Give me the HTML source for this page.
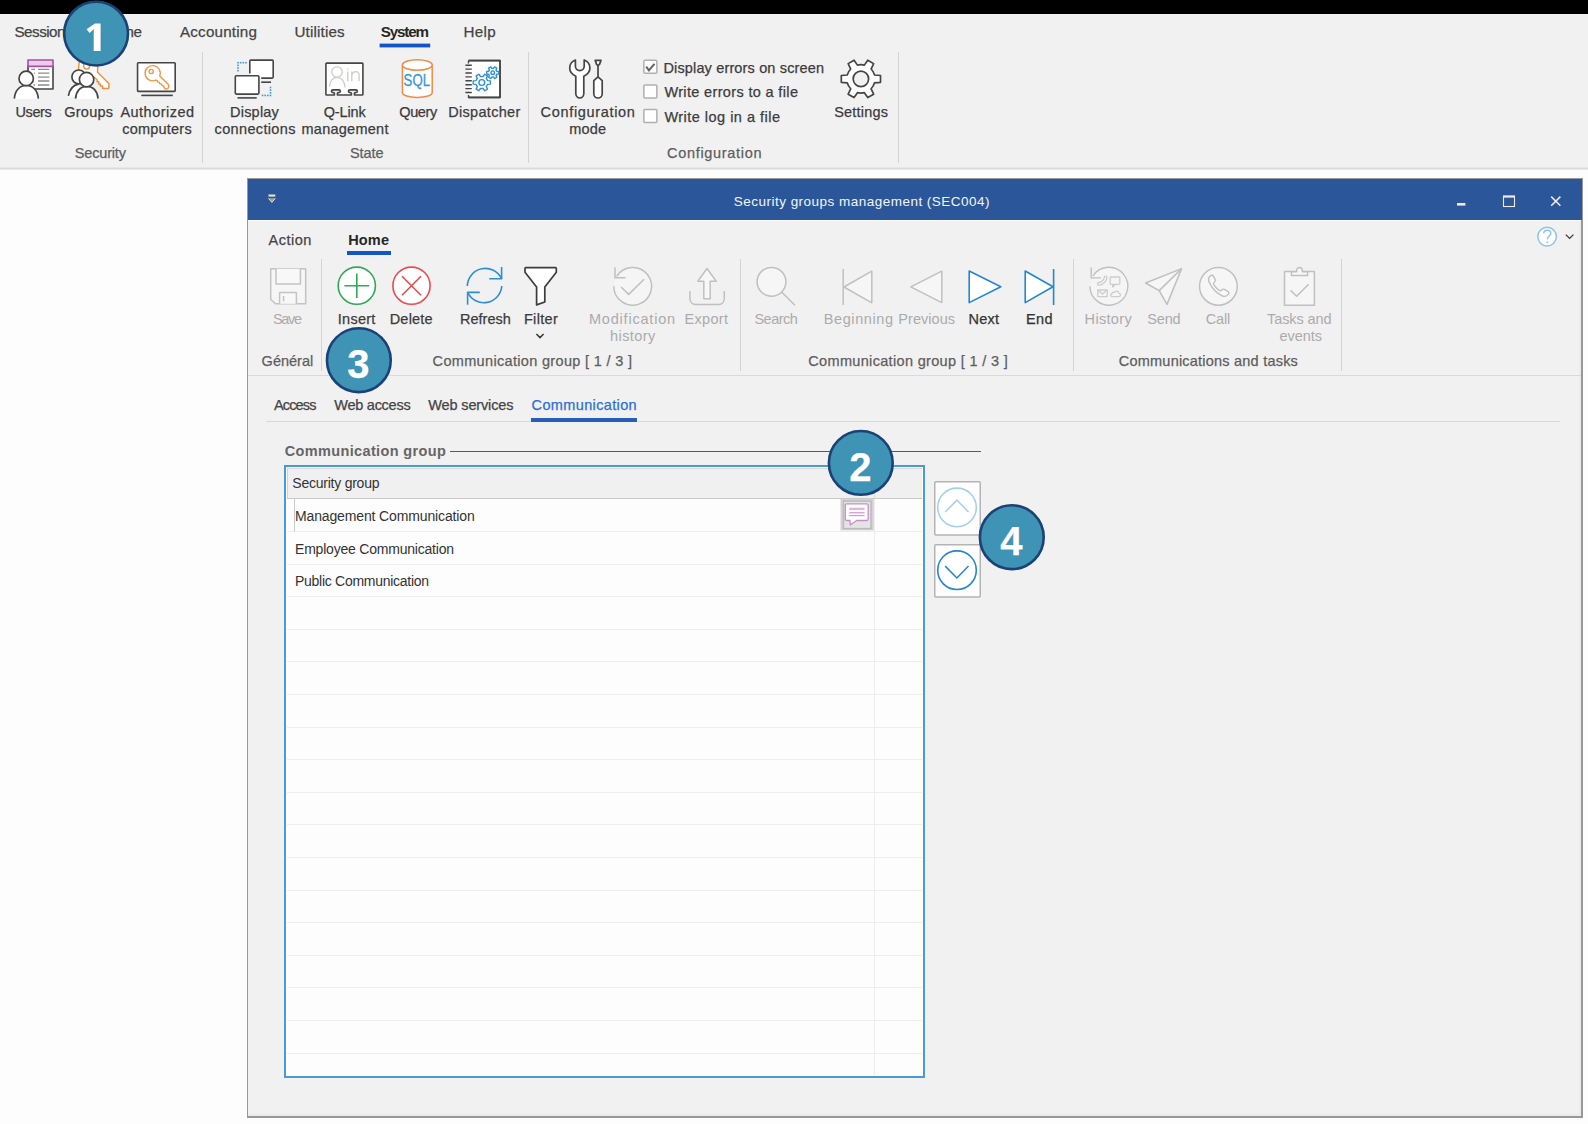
<!DOCTYPE html>
<html>
<head>
<meta charset="utf-8">
<title>Security groups management</title>
<style>
html,body{margin:0;padding:0;}
body{width:1588px;height:1124px;position:relative;overflow:hidden;background:#fdfdfd;font-family:"Liberation Sans",sans-serif;}
.a{position:absolute;}
.t{-webkit-text-stroke:0.25px currentColor;position:absolute;white-space:nowrap;line-height:20px;height:20px;font-family:"Liberation Sans",sans-serif;}
svg{position:absolute;left:0;top:0;overflow:visible;}
.n{width:60px;height:40px;line-height:40px;text-align:center;color:#fff;font-weight:700;font-size:40px;}
.vs{position:absolute;width:1px;background:#d4d4d4;}
.cb{position:absolute;width:13px;height:13px;border:1px solid #a6a6a6;background:#fdfdfd;}
.rl{position:absolute;left:287px;width:635px;height:1px;background:#ededed;}
</style>
</head>
<body>
<!-- top black bar -->
<div class="a" style="left:0;top:0;width:1588px;height:14px;background:#000;"></div>
<!-- main ribbon -->
<div class="a" style="left:0;top:14px;width:1588px;height:153px;background:#f1f1f1;"></div>
<div class="a" style="left:0;top:167px;width:1588px;height:3px;background:linear-gradient(#e8e8e8 0 33.3%,#d9d9d9 33.3% 66.6%,#ebebeb 66.6%);"></div>
<div class="vs" style="left:202px;top:52px;height:111px;"></div>
<div class="vs" style="left:528px;top:52px;height:111px;"></div>
<div class="vs" style="left:898px;top:52px;height:111px;"></div>
<!-- child window -->
<div class="a" style="left:247px;top:178px;width:1333px;height:937px;border:solid #989898;border-width:1px 2px 2px 1px;background:#f1f1f1;box-shadow:inset -2px -2px 0 #ebebeb;"></div>
<div class="a" style="left:248px;top:179px;width:1334px;height:41px;background:#2b579a;"></div>
<div class="a" style="left:248px;top:220px;width:1333px;height:1px;background:#fafafa;"></div>
<div class="a" style="left:347px;top:251px;width:44px;height:4px;background:#1156c4;"></div>
<div class="vs" style="left:321px;top:259px;height:112px;"></div>
<div class="vs" style="left:740px;top:259px;height:112px;"></div>
<div class="vs" style="left:1073px;top:259px;height:112px;"></div>
<div class="vs" style="left:1341px;top:259px;height:112px;"></div>
<div class="a" style="left:248px;top:375px;width:1333px;height:1px;background:#dadada;"></div>
<!-- sub tabs -->
<div class="a" style="left:266px;top:421px;width:1294px;height:1px;background:#d8d8d8;"></div>
<div class="a" style="left:531px;top:418px;width:106px;height:4px;background:#2a5db8;"></div>
<!-- group caption line -->
<div class="a" style="left:450px;top:451px;width:531px;height:1px;background:#5a5a5a;"></div>
<!-- grid -->
<div class="a" style="left:284px;top:465px;width:637px;height:609px;border:2px solid #4a9ad8;background:#fdfdfd;"></div>
<div class="a" style="left:287px;top:468px;width:634px;height:29px;background:#f0f0f0;border-left:1px solid #d6d4d2;border-top:1px solid #dad8d5;border-bottom:1px solid #c9c9c9;"></div>
<div class="a" style="left:874px;top:468px;width:1px;height:30px;background:#dcdcdc;"></div>
<div class="a" style="left:874px;top:499px;width:1px;height:576px;background:#ededed;"></div>
<div class="a" style="left:294px;top:499px;width:1px;height:32px;background:#c9c9c9;"></div>
<div class="rl" style="top:531px;"></div>
<div class="rl" style="top:564px;"></div>
<div class="rl" style="top:596px;"></div>
<div class="rl" style="top:629px;"></div>
<div class="rl" style="top:661px;"></div>
<div class="rl" style="top:694px;"></div>
<div class="rl" style="top:727px;"></div>
<div class="rl" style="top:759px;"></div>
<div class="rl" style="top:792px;"></div>
<div class="rl" style="top:824px;"></div>
<div class="rl" style="top:857px;"></div>
<div class="rl" style="top:890px;"></div>
<div class="rl" style="top:922px;"></div>
<div class="rl" style="top:955px;"></div>
<div class="rl" style="top:987px;"></div>
<div class="rl" style="top:1020px;"></div>
<div class="rl" style="top:1053px;"></div>
<svg width="1588" height="1124" viewBox="0 0 1588 1124" fill="none">
<!-- ===== TOP RIBBON ICONS ===== -->
<g stroke-linecap="butt" stroke-linejoin="round">
<!-- Users -->
<rect x="28" y="66" width="25" height="23" fill="#fff" stroke="#454545" stroke-width="1.6"/>
<rect x="28" y="60" width="25" height="6.4" fill="#e9cde9" stroke="#a74daa" stroke-width="1.6"/>
<g stroke="#8c8c8c" stroke-width="1.3">
<path d="M31.3 69.3H35M38 69.3H49.3M34 73.2H35M38 73.2H49.3M38 77.1H49.3M38 81H49.3M33.5 85H35M38 85H49.3"/>
</g>
<path d="M14.4 99C14.8 90.5 19.8 85.4 26.3 85.4C32.8 85.4 37.8 90.5 38.3 99Z" fill="#fff"/>
<path d="M14.4 98.6C14.8 90.5 19.8 85.4 26.3 85.4C32.8 85.4 37.8 90.5 38.3 98.6" stroke="#454545" stroke-width="1.7"/>
<circle cx="26.2" cy="78.4" r="7.2" fill="#fff" stroke="#454545" stroke-width="1.7"/>
<!-- Groups : key -->
<g stroke="#f0923d" stroke-width="1.5" fill="#fff">
<path d="M98.2 56L97.5 72.2L108.9 83.5V87.4C108.9 88 108.5 88.4 107.9 88.4H102.6V86.1H100.4V83.9H98.7V81.7H97.1V79.7L95.4 78.2L90 75C84 75 78.5 72 78.5 68.2L79.8 58Z"/>
<path d="M83.6 61V65C83.6 67.4 85 69.1 86.6 69.1C88.4 69.1 89.7 67.6 89.7 65V61" fill="none"/>
</g>
<!-- Groups : people -->
<path d="M68.2 96.5C69.5 89 72.5 85.3 78 84.2L82 96.5Z" fill="#fff"/>
<path d="M68.4 95.8C69.8 88.6 73 85 78.6 84.1" stroke="#454545" stroke-width="1.7"/>
<circle cx="78.8" cy="76.9" r="6.9" fill="#fff" stroke="#454545" stroke-width="1.7"/>
<path d="M75.6 99C76 91 80.5 86.3 86.8 86.3C93.1 86.3 97.6 91 98 99Z" fill="#fff"/>
<path d="M75.6 98.6C76 91 80.5 86.3 86.8 86.3C93.1 86.3 97.6 91 98 98.6" stroke="#454545" stroke-width="1.7"/>
<circle cx="86.6" cy="79.6" r="7.2" fill="#fff" stroke="#454545" stroke-width="1.7"/>
<!-- Authorized computers -->
<rect x="137.55" y="62.7" width="37.65" height="28.7" rx="0.8" fill="#fff" stroke="#454545" stroke-width="1.6"/>
<path d="M141.3 95.4H172.8" stroke="#454545" stroke-width="1.6"/>
<g stroke="#f0963f" stroke-width="1.35" fill="#fff" stroke-linejoin="round">
<path d="M159.7 76A7.6 7.6 0 1 0 155.8 80.1L157.2 80.4L157.7 82.1L159.3 82.1L159.9 83.9L161.5 83.9L162.1 85.7L163.6 85.8L164.1 87.6C164.6 88.9 166 89.2 167.4 88.8C168.5 88.4 168.9 87.3 168.8 85.9L168.2 84.2Z"/>
<circle cx="151.2" cy="71.5" r="2.1"/>
</g>
<!-- Display connections -->
<g fill="#3d9ad9" stroke="none"><rect x="237.20" y="61.90" width="1.6" height="1.6"/><rect x="239.85" y="61.90" width="1.6" height="1.6"/><rect x="242.50" y="61.90" width="1.6" height="1.6"/><rect x="245.15" y="61.90" width="1.6" height="1.6"/><rect x="237.20" y="64.55" width="1.6" height="1.6"/><rect x="237.20" y="67.20" width="1.6" height="1.6"/><rect x="237.20" y="69.85" width="1.6" height="1.6"/><rect x="269.70" y="86.70" width="1.6" height="1.6"/><rect x="269.70" y="89.35" width="1.6" height="1.6"/><rect x="269.70" y="92.00" width="1.6" height="1.6"/><rect x="269.70" y="94.65" width="1.6" height="1.6"/><rect x="261.75" y="94.65" width="1.6" height="1.6"/><rect x="264.40" y="94.65" width="1.6" height="1.6"/><rect x="267.05" y="94.65" width="1.6" height="1.6"/></g>
<rect x="249.8" y="60.1" width="23.4" height="18" rx="1" fill="#fff" stroke="none"/>
<path d="M249.8 73.6V61.1Q249.8 60.1 250.8 60.1H272.2Q273.2 60.1 273.2 61.1V77.1Q273.2 78.1 272.2 78.1H261.2" stroke="#454545" stroke-width="1.6" fill="none"/>
<path d="M261.2 82.2H271" stroke="#454545" stroke-width="1.6"/>
<rect x="235.3" y="75.8" width="23.6" height="18.3" rx="1" fill="#fff" stroke="#454545" stroke-width="1.6"/>
<path d="M237.5 97.9H256.7" stroke="#454545" stroke-width="1.6"/>
<!-- Q-Link management -->
<path d="M326.6 63.1H362.2Q362.9 63.1 362.9 63.8V94.3Q362.9 95 362.2 95H354.4V93.6C354.4 92.9 355 92.7 355.6 92.6C358 92.4 358 89.9 355.6 89.9H350.2C347.8 89.9 347.8 92.4 350.2 92.6C350.8 92.7 351.4 92.9 351.4 93.6V95H337.4V93.6C337.4 92.9 338 92.7 338.6 92.6C341 92.4 341 89.9 338.6 89.9H333.2C330.8 89.9 330.8 92.4 333.2 92.6C333.8 92.7 334.4 92.9 334.4 93.6V95H326.6Q325.9 95 325.9 94.3V63.8Q325.9 63.1 326.6 63.1Z" fill="#fff" stroke="#454545" stroke-width="1.6"/>
<g stroke="#cfccc8" stroke-width="1.3" fill="none">
<circle cx="337" cy="72" r="5.2"/>
<path d="M329.3 86.6C330.2 80.6 333 77.7 337 77.7C341.4 77.7 344.4 81.2 345.2 87.4"/>
<path d="M347.8 71.6V81.2M347.8 68.4V69.8M351.8 71.6V81.2M351.8 75.5C352.4 73 354 71.7 355.8 71.7C358 71.7 359.1 73.2 359.1 75.6V81.2"/>
</g>
<!-- Query (SQL) -->
<g stroke="#ee8c47" stroke-width="1.5" fill="#fff">
<path d="M402.4 65V92.5C402.4 95.4 409 97.4 417.3 97.4C425.6 97.4 432.2 95.4 432.2 92.5V65"/>
<ellipse cx="417.3" cy="65" rx="14.9" ry="5.2"/>
</g>
<text x="403.6" y="86.2" font-family="Liberation Sans, sans-serif" font-size="15.6" fill="#3a96d8" stroke="#3a96d8" stroke-width="0.3" textLength="26.4" lengthAdjust="spacingAndGlyphs">SQL</text>
<!-- Dispatcher -->
<path d="M468.6 60.6H500V97.4H468.6V95M468.6 63.5V60.6" fill="none" stroke="#454545" stroke-width="1.6"/>
<rect x="469.4" y="61.4" width="29.8" height="35.2" fill="#fff" stroke="none"/>
<path d="M468.6 60.6H500V97.4H468.6" fill="none" stroke="#454545" stroke-width="1.6"/>
<path d="M465.4 65.2H471.8M465.4 69.1H471.8M465.4 73H471.8M465.4 76.9H471.8M465.4 80.8H471.8M465.4 84.7H471.8M465.4 88.6H471.8M465.4 92.5H471.8" stroke="#454545" stroke-width="1.4"/>
<!-- checkboxes -->
<g fill="#fefefe" stroke="#b0b0b0" stroke-width="1.5">
<rect x="643.85" y="60.15" width="13" height="13" rx="1"/>
<rect x="643.85" y="84.95" width="13" height="13" rx="1"/>
<rect x="643.85" y="109.6" width="13" height="13" rx="1"/>
</g>
<path d="M646.2 66.7L648.9 70.3L654.5 63.9" stroke="#626262" stroke-width="2" fill="none" stroke-linejoin="miter"/>
<g stroke="#2f8fd3" stroke-width="1.4" fill="#fff" stroke-linejoin="round">
<path d="M487.49 80.60L490.40 80.89L490.40 84.11L487.49 84.40A6.00 6.00 0 0 1 486.29 86.48L487.50 89.14L484.70 90.76L483.00 88.38A6.00 6.00 0 0 1 480.60 88.38L478.90 90.76L476.10 89.14L477.31 86.48A6.00 6.00 0 0 1 476.11 84.40L473.20 84.11L473.20 80.89L476.11 80.60A6.00 6.00 0 0 1 477.31 78.52L476.10 75.86L478.90 74.24L480.60 76.62A6.00 6.00 0 0 1 483.00 76.62L484.70 74.24L487.50 75.86L486.29 78.52A6.00 6.00 0 0 1 487.49 80.60Z"/><circle cx="481.8" cy="82.5" r="2.9"/>
<path d="M496.73 71.20L498.70 71.42L498.70 73.98L496.73 74.20A4.30 4.30 0 0 1 496.01 75.44L496.80 77.26L494.60 78.53L493.42 76.94A4.30 4.30 0 0 1 491.98 76.94L490.80 78.53L488.60 77.26L489.39 75.44A4.30 4.30 0 0 1 488.67 74.20L486.70 73.98L486.70 71.42L488.67 71.20A4.30 4.30 0 0 1 489.39 69.96L488.60 68.14L490.80 66.87L491.98 68.46A4.30 4.30 0 0 1 493.42 68.46L494.60 66.87L496.80 68.14L496.01 69.96A4.30 4.30 0 0 1 496.73 71.20Z"/><circle cx="492.7" cy="72.7" r="1.8"/>
</g>
<g stroke="#454545" stroke-width="1.7" stroke-linejoin="round">
<path d="M874.55 75.00L880.50 75.50L880.50 82.30L874.55 82.80A14.20 14.20 0 0 1 871.10 88.77L873.64 94.17L867.76 97.57L864.35 92.67A14.20 14.20 0 0 1 857.45 92.67L854.04 97.57L848.16 94.17L850.70 88.77A14.20 14.20 0 0 1 847.25 82.80L841.30 82.30L841.30 75.50L847.25 75.00A14.20 14.20 0 0 1 850.70 69.03L848.16 63.63L854.04 60.23L857.45 65.13A14.20 14.20 0 0 1 864.35 65.13L867.76 60.23L873.64 63.63L871.10 69.03A14.20 14.20 0 0 1 874.55 75.00Z" fill="#fff"/><circle cx="860.9" cy="78.9" r="7.7" fill="#f1f1f1"/>
</g>
<g stroke="#454545" stroke-width="1.7" fill="#fff" stroke-linejoin="round">
<path d="M575.4 60C571.5 61.6 569.7 64.6 569.7 68C569.7 71.8 572 74.4 575.8 76.2V93.6C575.8 95.9 577.6 98 579.8 98C582 98 583.8 95.9 583.8 93.6V76.2C587.6 74.4 589.9 71.8 589.9 68C589.9 64.6 588.1 61.6 584.2 60V66.3C584.2 68.8 582.2 70.6 579.8 70.6C577.4 70.6 575.4 68.8 575.4 66.3Z"/>
<path d="M598 76.8L602.2 80.6V94C602.2 96.2 600.3 98 598 98C595.7 98 593.8 96.2 593.8 94V80.6Z"/>
<path d="M595.2 60.4H601L599.5 64.4L598 65.7L596.6 64.4Z"/>
<path d="M598 65.7V76.8" fill="none"/>
</g>
</g>
<!-- ===== TITLE BAR ===== -->
<g>
<rect x="268.5" y="194.5" width="6.8" height="2.1" fill="#e9e4da"/>
<path d="M268.3 198.2H275.5L271.9 202.6Z" fill="#a89f90"/>
<path d="M268.5 198.4L271.9 202.4L275.3 198.4" stroke="#e9e4da" stroke-width="0.9" fill="none"/>
<rect x="1457" y="203" width="8.4" height="2.6" fill="#f0ece4"/>
<rect x="1503.5" y="196.5" width="11" height="10" stroke="#f0ece4" stroke-width="1.1" fill="none"/>
<rect x="1503" y="195.4" width="12" height="2.2" fill="#f0ece4"/>
<path d="M1551.2 196.6L1560.4 205.8M1560.4 196.6L1551.2 205.8" stroke="#f0ece4" stroke-width="1.5"/>
<!-- help -->
<circle cx="1547.1" cy="236.6" r="9.3" fill="#fff" stroke="#8cc3e8" stroke-width="1.5"/>
<path d="M1543.6 233.4C1543.8 231.3 1545.3 230.2 1547.2 230.2C1549.3 230.2 1550.8 231.4 1550.8 233.2C1550.8 236 1547.3 236.2 1547.3 239.4" stroke="#8cc3e8" stroke-width="1.4" fill="none"/>
<circle cx="1547.3" cy="242.4" r="0.9" fill="#8cc3e8"/>
<path d="M1565.8 234.6L1569.6 238.4L1573.4 234.6" stroke="#3a3a3a" stroke-width="1.3" fill="none"/>
</g>
<!-- ===== INNER RIBBON ICONS ===== -->
<g stroke-linejoin="round">
<!-- Save (disabled) -->
<g stroke="#c3c3c3" stroke-width="1.5" fill="#f6f6f6">
<path d="M270.7 268.8H305.7V303.8H275.5L270.7 299.2Z"/>
<path d="M276 268.8V284H300.4V268.8" fill="#f8f8f8"/>
<path d="M279.6 303.8V292.6H296.4V303.8" fill="#f8f8f8"/>
<path d="M283.6 296V301.4" fill="none"/>
</g>
<!-- Insert -->
<circle cx="356.8" cy="285.7" r="18.6" fill="#fff" stroke="#2faa55" stroke-width="1.6"/>
<path d="M344.4 285.7H369.2M356.8 273.4V298" stroke="#2faa55" stroke-width="1.6"/>
<!-- Delete -->
<circle cx="411.5" cy="285.7" r="18.6" fill="#fff" stroke="#ea4a4e" stroke-width="1.6"/>
<path d="M402 276.2L421 295.2M421 276.2L402 295.2" stroke="#ea4a4e" stroke-width="1.6"/>
<!-- Refresh -->
<g stroke="#2c8ed6" stroke-width="1.6" fill="none">
<path d="M467.3 286A18 18 0 0 1 501.6 278.8"/>
<path d="M501.6 266.9V278.8H489.3"/>
<path d="M501.8 286A18 18 0 0 1 467.6 292.4"/>
<path d="M467.6 304.7V292.4H479.8"/>
</g>
<!-- Filter -->
<path d="M525.8 267.7H555.5Q556.3 267.7 556.3 268.5V272.3L544.8 287V302L536.6 304.9V287L525 272.3V268.5Q525 267.7 525.8 267.7Z" fill="#fff" stroke="#3c3c3c" stroke-width="1.7"/>
<path d="M536.4 334L540 337.6L543.6 334" stroke="#3a3a3a" stroke-width="1.5" fill="none"/>
<!-- Modification history (disabled) -->
<g stroke="#c0c0c0" stroke-width="1.5" fill="none">
<path d="M616.67 276.28A18.9 18.9 0 1 1 613.80 286.3" fill="#f5f5f5"/>
<path d="M615 267.5V277.8H625.5"/>
<path d="M621 287L628.7 294.4L644.1 279.2"/>
</g>
<!-- Export (disabled) -->
<g stroke="#c0c0c0" stroke-width="1.5" fill="#f7f7f7">
<path d="M689.9 291V298.4C689.9 302.2 692.6 304.6 696.2 304.6H718C721.6 304.6 724.3 302.2 724.3 298.4V291" fill="none"/>
<path d="M707 268.5L716.2 281.3H710.2V298.8H703.8V281.3H697.8Z"/>
</g>
<!-- Search (disabled) -->
<g stroke="#c0c0c0" stroke-width="1.5" fill="#f6f6f6">
<circle cx="771.5" cy="281.8" r="14.4"/>
<path d="M781.8 292.2L795 305.2"/>
</g>
<!-- Beginning -->
<g stroke="#c0c0c0" stroke-width="1.5" fill="#f6f6f6">
<path d="M844 287L871.8 271.2V302.8Z"/>
<path d="M843.2 269V305"/>
<!-- Previous -->
<path d="M910.8 286.8L941.8 271.2V302.6Z"/>
</g>
<!-- Next / End -->
<g stroke="#2486d2" stroke-width="1.6" fill="#fff">
<path d="M969.2 271L1000.8 286.8L969.2 302.6Z"/>
<path d="M1025.2 271L1053 286.8L1025.2 302.6Z"/>
<path d="M1053.6 269V305"/>
</g>
<!-- History (disabled) -->
<g stroke="#c0c0c0" stroke-width="1.4" fill="none">
<path d="M1093.05 275.91A18.9 18.9 0 1 1 1090.00 286.2" fill="#f5f5f5"/>
<path d="M1091.2 267.4V277.9H1101"/>
</g>
<g stroke="#cdcdcd" stroke-width="1.3" fill="none">
<rect x="1110.2" y="277" width="9.6" height="7.4" rx="0.8"/>
<path d="M1112.6 284.4V287L1115.4 284.4"/>
<path d="M1097.8 284.8C1096.6 283.6 1098.6 281.4 1100 282.6C1102 281.6 1103.8 279.8 1104.4 277.8C1103.6 276.4 1105.8 275.4 1106.8 276.8C1107.6 280.4 1101.8 286.4 1097.8 284.8Z"/>
<rect x="1097.8" y="290" width="9.4" height="6.6"/>
<path d="M1097.8 290L1102.5 294L1107.2 290"/>
<path d="M1112.4 296.6H1118.6C1121 296.6 1121 293.4 1118.8 293.2C1118.6 290.8 1115.2 290.6 1114.4 292.4C1112.6 291.8 1111.4 293.2 1111.8 294.2C1110 294.4 1110.2 296.6 1112.4 296.6Z"/>
</g>
<!-- Send -->
<path d="M1181.6 268.6L1145.6 283L1159.2 290.6L1167 304.4Z" stroke="#c0c0c0" stroke-width="1.5" fill="#f6f6f6"/>
<path d="M1159.2 290.6L1181.6 268.6" stroke="#c0c0c0" stroke-width="1.5"/>
<!-- Call -->
<circle cx="1218.4" cy="286.3" r="18.85" stroke="#c0c0c0" stroke-width="1.5" fill="#f6f6f6"/>
<path d="M1210.4 275.8C1208.4 277.4 1208 279.6 1209.4 282.6C1211.8 287.8 1216.4 292.8 1221.8 295.6C1224.6 297 1226.8 296.4 1228.4 294.2C1229.2 293 1228.8 292 1227.8 291.4L1224.4 289.4C1223.2 288.8 1222.4 289.2 1221.8 290C1221 291 1220.2 291 1219 290.2C1217 288.8 1215 286.6 1213.8 284.6C1213.2 283.4 1213.4 282.6 1214.4 282C1215.4 281.4 1215.8 280.6 1215.2 279.4L1213.4 276.2C1212.6 275 1211.4 275 1210.4 275.8Z" stroke="#c0c0c0" stroke-width="1.4" fill="#f8f8f8"/>
<!-- Tasks and events -->
<g stroke="#c0c0c0" stroke-width="1.5" fill="#f6f6f6">
<rect x="1284.5" y="271.4" width="29.9" height="33.8"/>
<path d="M1291.4 271.8V275.6H1307.6V271.8H1302.4C1302.4 269 1301.2 267.6 1299.5 267.6C1297.8 267.6 1296.6 269 1296.6 271.8Z"/>
<path d="M1290.6 290.4L1296.6 296.2L1308.6 284.2" fill="none"/>
</g>
</g>
<!-- ===== GRID ICONS ===== -->
<g>
<rect x="379.6" y="43.6" width="50.6" height="3.8" fill="#1156c4"/>
<rect x="840.5" y="498.9" width="33.3" height="31.5" fill="#d3d3d3"/>
<rect x="843.5" y="501.1" width="27.5" height="27.5" fill="#e4e4e4" stroke="#b9b9b9" stroke-width="1.4"/>
<path d="M846.7 503.8H866.8Q868.2 503.8 868.2 505.2V519.1Q868.2 520.5 866.8 520.5H856.6L850.3 525L849.9 520.5H846.7Q845.3 520.5 845.3 519.1V505.2Q845.3 503.8 846.7 503.8Z" fill="#fff" stroke="#c98ccb" stroke-width="1.3" stroke-linejoin="round"/>
<path d="M849.3 508.9H864.6" stroke="#dcb8dd" stroke-width="2.4"/>
<path d="M849.3 512.7H864.6" stroke="#d6a6d7" stroke-width="1.5"/>
<path d="M849.3 515.6H864.6" stroke="#d09ad2" stroke-width="1.2"/>
<rect x="934.75" y="481.7" width="45.5" height="53.4" rx="1" fill="#fdfdfd" stroke="#b4b4b4" stroke-width="1.5"/>
<rect x="934.75" y="544.65" width="45.5" height="52.4" rx="1" fill="#fdfdfd" stroke="#b4b4b4" stroke-width="1.5"/>
<circle cx="957" cy="507.4" r="19.3" fill="#fff" stroke="#a3cfee" stroke-width="1.6"/>
<path d="M945.2 512L956.9 500.1L968.5 512" stroke="#a3cfee" stroke-width="1.5" fill="none"/>
<circle cx="957" cy="570.2" r="19.3" fill="#fff" stroke="#2486d2" stroke-width="1.6"/>
<path d="M945.2 566.1L956.9 578L968.5 566.1" stroke="#2486d2" stroke-width="1.5" fill="none"/>
</g>
</svg>

<!-- labels -->
<div class="t" style="left:14.50px;top:22.23px;font-size:15.2px;color:#444;letter-spacing:-0.514px;">Session</div>
<div class="t" style="left:102.50px;top:22.23px;font-size:15.2px;color:#444;letter-spacing:-0.355px;">Home</div>
<div class="t" style="left:180.00px;top:22.23px;font-size:15.2px;color:#444;letter-spacing:0.200px;">Accounting</div>
<div class="t" style="left:294.50px;top:22.23px;font-size:15.2px;color:#444;letter-spacing:0.144px;">Utilities</div>
<div class="t" style="left:380.70px;top:22.23px;font-size:15.2px;color:#262626;letter-spacing:-1.125px;font-weight:700;-webkit-text-stroke-width:0px;">System</div>
<div class="t" style="left:463.60px;top:22.23px;font-size:15.2px;color:#444;letter-spacing:0.304px;">Help</div>
<div class="t" style="left:15.40px;top:101.98px;font-size:14.5px;color:#3c3c3c;letter-spacing:-0.354px;">Users</div>
<div class="t" style="left:64.20px;top:101.98px;font-size:14.5px;color:#3c3c3c;letter-spacing:0.260px;">Groups</div>
<div class="t" style="left:120.40px;top:101.98px;font-size:14.5px;color:#3c3c3c;letter-spacing:0.483px;">Authorized</div>
<div class="t" style="left:122.20px;top:118.98px;font-size:14.5px;color:#3c3c3c;letter-spacing:0.220px;">computers</div>
<div class="t" style="left:230.00px;top:101.98px;font-size:14.5px;color:#3c3c3c;letter-spacing:0.218px;">Display</div>
<div class="t" style="left:214.60px;top:118.98px;font-size:14.5px;color:#3c3c3c;letter-spacing:0.346px;">connections</div>
<div class="t" style="left:323.70px;top:101.98px;font-size:14.5px;color:#3c3c3c;letter-spacing:-0.131px;">Q-Link</div>
<div class="t" style="left:301.50px;top:118.98px;font-size:14.5px;color:#3c3c3c;letter-spacing:0.255px;">management</div>
<div class="t" style="left:399.30px;top:101.98px;font-size:14.5px;color:#3c3c3c;letter-spacing:-0.409px;">Query</div>
<div class="t" style="left:448.20px;top:101.98px;font-size:14.5px;color:#3c3c3c;letter-spacing:0.314px;">Dispatcher</div>
<div class="t" style="left:540.60px;top:101.98px;font-size:14.5px;color:#3c3c3c;letter-spacing:0.668px;">Configuration</div>
<div class="t" style="left:569.30px;top:118.98px;font-size:14.5px;color:#3c3c3c;letter-spacing:0.198px;">mode</div>
<div class="t" style="left:663.40px;top:57.98px;font-size:14.5px;color:#3c3c3c;letter-spacing:0.153px;">Display errors on screen</div>
<div class="t" style="left:664.40px;top:81.98px;font-size:14.5px;color:#3c3c3c;letter-spacing:0.349px;">Write errors to a file</div>
<div class="t" style="left:664.40px;top:106.98px;font-size:14.5px;color:#3c3c3c;letter-spacing:0.480px;">Write log in a file</div>
<div class="t" style="left:834.20px;top:101.98px;font-size:14.5px;color:#3c3c3c;letter-spacing:0.208px;">Settings</div>
<div class="t" style="left:74.80px;top:142.98px;font-size:14.5px;color:#5e5e5e;letter-spacing:-0.175px;">Security</div>
<div class="t" style="left:350.00px;top:142.98px;font-size:14.5px;color:#5e5e5e;letter-spacing:-0.098px;">State</div>
<div class="t" style="left:667.00px;top:142.98px;font-size:14.5px;color:#5e5e5e;letter-spacing:0.693px;">Configuration</div>
<div class="t" style="left:733.80px;top:192.32px;font-size:13.5px;color:#f4f4f4;letter-spacing:0.480px;-webkit-text-stroke-width:0px;">Security groups management (SEC004)</div>
<div class="t" style="left:268.60px;top:229.98px;font-size:14.5px;color:#444;letter-spacing:0.493px;">Action</div>
<div class="t" style="left:348.20px;top:229.98px;font-size:14.5px;color:#262626;letter-spacing:0.160px;font-weight:700;-webkit-text-stroke-width:0px;">Home</div>
<div class="t" style="left:273.00px;top:308.98px;font-size:14.5px;color:#ababab;letter-spacing:-1.329px;-webkit-text-stroke-width:0px;">Save</div>
<div class="t" style="left:337.80px;top:308.98px;font-size:14.5px;color:#3c3c3c;letter-spacing:0.253px;">Insert</div>
<div class="t" style="left:389.70px;top:308.98px;font-size:14.5px;color:#3c3c3c;letter-spacing:0.210px;">Delete</div>
<div class="t" style="left:460.00px;top:308.98px;font-size:14.5px;color:#3c3c3c;letter-spacing:-0.001px;">Refresh</div>
<div class="t" style="left:523.90px;top:308.98px;font-size:14.5px;color:#3c3c3c;letter-spacing:0.341px;">Filter</div>
<div class="t" style="left:589.00px;top:308.98px;font-size:14.5px;color:#ababab;letter-spacing:0.790px;-webkit-text-stroke-width:0px;">Modification</div>
<div class="t" style="left:610.00px;top:325.98px;font-size:14.5px;color:#ababab;letter-spacing:0.424px;-webkit-text-stroke-width:0px;">history</div>
<div class="t" style="left:684.50px;top:308.98px;font-size:14.5px;color:#ababab;letter-spacing:0.324px;-webkit-text-stroke-width:0px;">Export</div>
<div class="t" style="left:754.40px;top:308.98px;font-size:14.5px;color:#ababab;letter-spacing:-0.496px;-webkit-text-stroke-width:0px;">Search</div>
<div class="t" style="left:823.70px;top:308.98px;font-size:14.5px;color:#ababab;letter-spacing:0.608px;-webkit-text-stroke-width:0px;">Beginning</div>
<div class="t" style="left:898.30px;top:308.98px;font-size:14.5px;color:#ababab;letter-spacing:0.048px;-webkit-text-stroke-width:0px;">Previous</div>
<div class="t" style="left:968.60px;top:308.98px;font-size:14.5px;color:#333;letter-spacing:0.171px;">Next</div>
<div class="t" style="left:1026.00px;top:308.98px;font-size:14.5px;color:#333;letter-spacing:0.332px;">End</div>
<div class="t" style="left:1084.60px;top:308.98px;font-size:14.5px;color:#ababab;letter-spacing:0.323px;-webkit-text-stroke-width:0px;">History</div>
<div class="t" style="left:1147.30px;top:308.98px;font-size:14.5px;color:#ababab;letter-spacing:-0.200px;-webkit-text-stroke-width:0px;">Send</div>
<div class="t" style="left:1205.80px;top:308.98px;font-size:14.5px;color:#ababab;letter-spacing:-0.186px;-webkit-text-stroke-width:0px;">Call</div>
<div class="t" style="left:1267.00px;top:308.98px;font-size:14.5px;color:#ababab;letter-spacing:-0.078px;-webkit-text-stroke-width:0px;">Tasks and</div>
<div class="t" style="left:1279.60px;top:325.98px;font-size:14.5px;color:#ababab;letter-spacing:-0.054px;-webkit-text-stroke-width:0px;">events</div>
<div class="t" style="left:261.60px;top:350.98px;font-size:14.5px;color:#5e5e5e;letter-spacing:0.006px;">Général</div>
<div class="t" style="left:432.60px;top:350.98px;font-size:14.5px;color:#5e5e5e;letter-spacing:0.329px;">Communication group [ 1 / 3 ]</div>
<div class="t" style="left:808.30px;top:350.98px;font-size:14.5px;color:#5e5e5e;letter-spacing:0.329px;">Communication group [ 1 / 3 ]</div>
<div class="t" style="left:1118.80px;top:350.98px;font-size:14.5px;color:#5e5e5e;letter-spacing:0.216px;">Communications and tasks</div>
<div class="t" style="left:273.90px;top:394.98px;font-size:14.5px;color:#444;letter-spacing:-0.837px;">Access</div>
<div class="t" style="left:334.30px;top:394.98px;font-size:14.5px;color:#444;letter-spacing:-0.262px;">Web access</div>
<div class="t" style="left:428.30px;top:394.98px;font-size:14.5px;color:#444;letter-spacing:-0.146px;">Web services</div>
<div class="t" style="left:531.60px;top:394.98px;font-size:14.5px;color:#2f6fd0;letter-spacing:0.361px;">Communication</div>
<div class="t" style="left:284.70px;top:440.98px;font-size:14.5px;color:#666;letter-spacing:0.361px;font-weight:700;-webkit-text-stroke-width:0px;">Communication group</div>
<div class="t" style="left:292.30px;top:473.15px;font-size:14px;color:#333;letter-spacing:-0.237px;-webkit-text-stroke-width:0px;">Security group</div>
<div class="t" style="left:295.00px;top:506.15px;font-size:14px;color:#333;letter-spacing:-0.138px;-webkit-text-stroke-width:0px;">Management Communication</div>
<div class="t" style="left:295.00px;top:539.15px;font-size:14px;color:#333;letter-spacing:-0.210px;-webkit-text-stroke-width:0px;">Employee Communication</div>
<div class="t" style="left:295.00px;top:571.15px;font-size:14px;color:#333;letter-spacing:-0.273px;-webkit-text-stroke-width:0px;">Public Communication</div>
<!-- callouts -->
<svg width="1588" height="1124" viewBox="0 0 1588 1124">
<g fill="#3f93b4" stroke="#1b4277" stroke-width="2.6">
<circle cx="96.1" cy="33.6" r="31.9"/>
<circle cx="860.8" cy="462.9" r="31.9"/>
<circle cx="358.85" cy="360.2" r="31.9"/>
<circle cx="1011.8" cy="537.2" r="31.9"/>
</g>
<path d="M100.6 23.5V51.1H93.7V33.2C93.7 31.9 93.75 30.5 93.85 29L89.6 32.9L86.6 29.2L94.9 23.5Z" fill="#fff"/>
</svg>
<div class="t n" style="left:830.40px;top:446.90px;">2</div>
<div class="t n" style="left:328.45px;top:344.20px;">3</div>
<div class="t n" style="left:981.40px;top:521.20px;">4</div>

</body>
</html>
